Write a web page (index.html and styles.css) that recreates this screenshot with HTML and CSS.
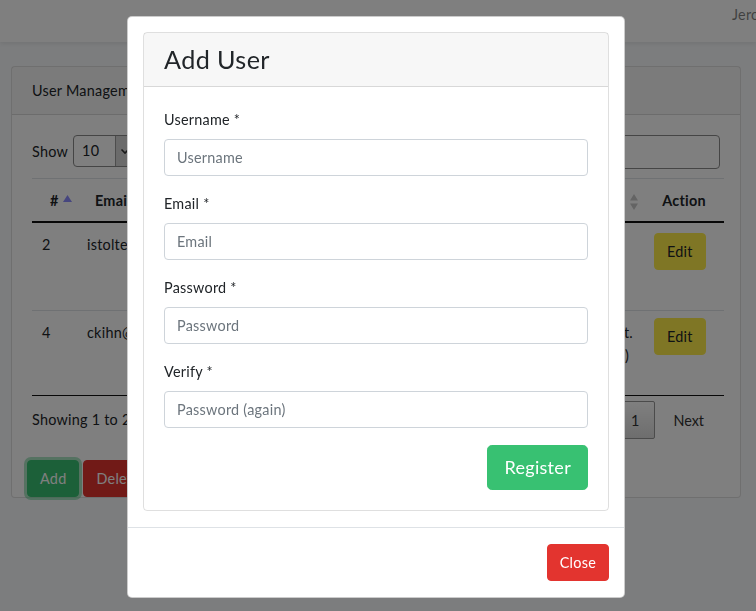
FILE: index.html
```html
<!DOCTYPE html>
<html lang="en">
<head>
<meta charset="utf-8">
<title>User Management</title>
<link rel="stylesheet" href="styles.css">
</head>
<body>
<nav class="navbar">
  <div class="nav-user">Jerome Smith</div>
</nav>
<main class="main">
  <section class="card">
    <div class="card-header">User Management</div>
    <div class="card-body">
      <div class="dt-top">
        <div class="dt-length">
          <span>Show</span>
          <span class="select"><span class="select-val">10</span><span class="select-arrow"><svg width="10" height="10" viewBox="0 0 10 10"><path d="M1.5 3.5 L5 7 L8.5 3.5" fill="none" stroke="#333" stroke-width="1.6"/></svg></span></span>
          <span>entries</span>
        </div>
        <div class="dt-filter">
          <span>Search:</span>
          <span class="search-input"></span>
        </div>
      </div>
      <table class="dt">
        <colgroup>
          <col class="c-id"><col class="c-email"><col class="c-name"><col class="c-action">
        </colgroup>
        <thead>
          <tr>
            <th>#<span class="sort-icon asc"><svg width="9" height="7" viewBox="0 0 9 7"><path d="M4.5 0 L9 7 L0 7 Z" fill="#8c8cff"/></svg></span></th>
            <th>Email<span class="sort-icon both"><svg width="8" height="16" viewBox="0 0 8 16"><path d="M4 0 L8 6.5 L0 6.5 Z M0 9.5 L8 9.5 L4 16 Z" fill="#c8c8c8"/></svg></span></th>
            <th>Company<span class="sort-icon both"><svg width="8" height="16" viewBox="0 0 8 16"><path d="M4 0 L8 6.5 L0 6.5 Z M0 9.5 L8 9.5 L4 16 Z" fill="#c8c8c8"/></svg></span></th>
            <th class="th-action">Action</th>
          </tr>
        </thead>
        <tbody>
          <tr>
            <td><div class="cell r1">2</div></td>
            <td><div class="cell r1">istolte@example.org</div></td>
            <td><div class="cell r1"></div></td>
            <td><div class="cell r1"><button class="btn btn-warning">Edit</button></div></td>
          </tr>
          <tr>
            <td class="td-r2"><div class="cell r2">4</div></td>
            <td class="td-r2"><div class="cell r2">ckihn@example.net</div></td>
            <td class="td-r2"><div class="cell r2 right">Kihn-Schmidt Consult.<br><span class="line-short">(Berlin)</span></div></td>
            <td class="td-r2 td-btn"><div class="cell r2"><button class="btn btn-warning">Edit</button></div></td>
          </tr>
        </tbody>
      </table>
      <div class="dt-bottom">
        <div class="dt-info">Showing 1 to 2 of 2 entries</div>
        <div class="dt-paginate">
          <span class="pg-btn disabled">Previous</span>
          <span class="pg-btn current">1</span>
          <span class="pg-btn">Next</span>
        </div>
      </div>
    </div>
    <div class="actions">
      <button class="btn btn-success focus">Add</button>
      <button class="btn btn-danger">Delete</button>
    </div>
  </section>
</main>

<div class="backdrop"></div>

<div class="modal">
  <div class="modal-content">
    <div class="modal-body">
      <div class="inner-card">
        <div class="inner-header"><h3>Add User</h3></div>
        <form class="inner-body">
          <div class="form-group">
            <label>Username *</label>
            <input class="form-control" type="text" placeholder="Username">
          </div>
          <div class="form-group">
            <label>Email *</label>
            <input class="form-control" type="email" placeholder="Email">
          </div>
          <div class="form-group">
            <label>Password *</label>
            <input class="form-control" type="password" placeholder="Password">
          </div>
          <div class="form-group">
            <label>Verify *</label>
            <input class="form-control" type="password" placeholder="Password (again)">
          </div>
          <div class="form-submit">
            <button type="button" class="btn btn-lg btn-register">Register</button>
          </div>
        </form>
      </div>
    </div>
    <div class="modal-footer">
      <button class="btn btn-close">Close</button>
    </div>
  </div>
</div>
</body>
</html>
```

FILE: styles.css
```css
* { box-sizing: border-box; }

html, body {
  margin: 0;
  height: 100%;
}

body {
  font-family: Lato, "Noto Sans", "Liberation Sans", sans-serif;
  font-size: 14.4px;
  line-height: 23px;
  letter-spacing: 0.25px;
  color: #212529;
  background: #f8fafc;
  overflow: hidden;
}

/* navbar */
.navbar {
  height: 42px;
  background: #fff;
  box-shadow: 0 2px 4px rgba(0, 0, 0, 0.075);
  display: flex;
  justify-content: flex-end;
  align-items: flex-start;
  padding-top: 3px;
}

.nav-user {
  flex: 0 0 24px;
  min-width: 0;
  white-space: nowrap;
  color: rgba(0, 0, 0, 0.5);
}

.main {
  padding: 24px 15px 0 11px;
}

/* card */
.card {
  background: #fff;
  border: 1px solid rgba(0, 0, 0, 0.125);
  border-radius: 4px;
  width: 730px;
}

.card-header {
  padding: 12px 20px;
  background: rgba(0, 0, 0, 0.03);
  border-bottom: 1px solid rgba(0, 0, 0, 0.125);
}

.card-body {
  padding: 20px 20px 0;
}

.dt-top {
  display: flex;
  justify-content: space-between;
  align-items: flex-start;
  height: 34px;
}

.dt-length {
  display: flex;
  align-items: center;
  gap: 4px;
  height: 32px;
}

.select {
  display: flex;
  width: 61px;
  height: 32px;
  margin: 0 1px 0 1px;
  border: 1px solid #8a8a8a;
  border-radius: 4px;
  overflow: hidden;
  background: #fff;
}

.select-val {
  flex: 1;
  padding-left: 8px;
  line-height: 30px;
}

.select-arrow {
  width: 18px;
  background: #d6d6d6;
  border-left: 1px solid #9a9a9a;
  display: flex;
  align-items: center;
  justify-content: center;
}

.dt-filter {
  display: flex;
  align-items: center;
  gap: 6px;
}

.search-input {
  width: 170px;
  height: 34px;
  border: 1px solid #8a8a8a;
  border-radius: 4px;
  background: #fff;
}

/* table */
.dt {
  margin-top: 9px;
  width: 692px;
  border-collapse: collapse;
  table-layout: fixed;
  border-bottom: 1px solid #111;
}

.c-id { width: 45px; }
.c-email { width: 303px; }
.c-name { width: 264px; }
.c-action { width: 80px; }

.dt th {
  position: relative;
  text-align: left;
  font-weight: 700;
  padding: 10px 18px 9px;
  border-top: 1px solid #dee2e6;
  border-bottom: 2px solid #111;
  white-space: nowrap;
}

.dt th.th-action {
  text-align: center;
  padding: 10px 10px 9px;
}

.sort-icon {
  position: absolute;
  display: block;
  line-height: 0;
}

.sort-icon.asc {
  right: 5px;
  top: 16px;
}

.sort-icon.both {
  right: 6px;
  top: 15px;
}

.dt td {
  padding: 10px;
  border-top: 1px solid #dee2e6;
  vertical-align: top;
  white-space: nowrap;
  overflow: hidden;
}

.dt td.td-btn {
  padding-top: 7px;
  padding-bottom: 13px;
}

.cell.r1 { min-height: 67px; }
.cell.r2 { min-height: 64px; }
.cell.right { text-align: right; padding-right: 1px; }
.line-short { margin-right: 4px; }

.dt-bottom {
  display: flex;
  justify-content: space-between;
  align-items: flex-start;
}

.dt-info {
  padding-top: 12px;
}

.dt-paginate {
  display: flex;
  padding-top: 5px;
}

.pg-btn {
  padding: 7px 15px 6px;
  margin-left: 2px;
  border: 1px solid transparent;
  border-radius: 2px;
  color: #333;
  letter-spacing: 0;
}

.pg-btn.disabled { color: #666; }

.pg-btn.current {
  border-color: #979797;
  background: linear-gradient(to bottom, #fff 0%, #dcdcdc 100%);
}

/* buttons */
.btn {
  font-family: inherit;
  font-size: 14.4px;
  line-height: 23px;
  letter-spacing: 0.25px;
  padding: 6px 12px;
  border: 1px solid transparent;
  border-radius: 4px;
  cursor: pointer;
}

.btn-warning {
  background: #ffed4a;
  border-color: #ffed4a;
  color: #212529;
}

.btn-success {
  background: #38c172;
  border-color: #38c172;
  color: #fff;
}

.btn-success.focus {
  box-shadow: 0 0 0 3px rgba(86, 202, 135, 0.5);
}

.btn-danger {
  background: #e3342f;
  border-color: #e3342f;
  color: #fff;
}

.actions {
  display: flex;
  gap: 4px;
  padding: 21px 15px 0;
}

/* modal */
.backdrop {
  position: fixed;
  inset: 0;
  background: rgba(0, 0, 0, 0.5);
}

.modal {
  position: fixed;
  top: 16px;
  left: 0;
  right: 0;
  display: flex;
  justify-content: center;
}

.modal-content {
  width: 498px;
  margin-left: -4px;
  background: #fff;
  border: 1px solid rgba(0, 0, 0, 0.2);
  border-radius: 5px;
}

.modal-body {
  padding: 15px 15px 16px;
}

.inner-card {
  border: 1px solid rgba(0, 0, 0, 0.125);
  border-radius: 4px;
}

.inner-header {
  padding: 12px 20px;
  background: rgba(0, 0, 0, 0.03);
  border-bottom: 1px solid rgba(0, 0, 0, 0.125);
}

.inner-header h3 {
  margin: 0;
  font-size: 25.2px;
  font-weight: 400;
  line-height: 29px;
  letter-spacing: 0.4px;
}

.inner-body {
  padding: 21px 20px 20px;
  margin: 0;
}

.form-group {
  margin-bottom: 16px;
}

.form-group label {
  display: block;
  margin-bottom: 8px;
}

.form-control {
  display: block;
  width: 100%;
  height: 37px;
  padding: 6px 12px;
  font-family: inherit;
  font-size: 14.4px;
  letter-spacing: 0.25px;
  color: #495057;
  background: #fff;
  border: 1px solid #ced4da;
  border-radius: 4px;
}

.form-control::placeholder {
  color: #6c757d;
}

.form-submit {
  display: flex;
  justify-content: flex-end;
  padding-top: 1px;
}

.btn-lg {
  font-size: 18px;
  line-height: 27px;
  letter-spacing: 0.3px;
  padding: 8px 16px;
  border-radius: 4.8px;
}

.btn-register {
  background: #38c172;
  border-color: #38c172;
  color: #fff;
}

.modal-footer {
  display: flex;
  justify-content: flex-end;
  padding: 12px 11px 12px 12px;
  border-top: 1px solid #dee2e6;
}

.btn-close {
  margin: 4px;
  background: #e3342f;
  border-color: #e3342f;
  color: #fff;
}
```
